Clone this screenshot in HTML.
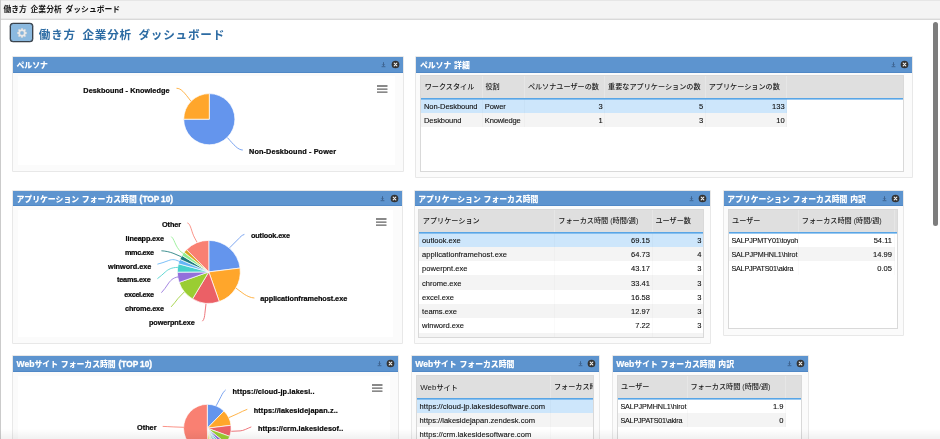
<!DOCTYPE html>
<html lang="ja"><head><meta charset="utf-8"><title>働き方 企業分析 ダッシュボード</title>
<style>
html,body{margin:0;padding:0;background:#fff;}
body{width:940px;height:439px;overflow:hidden;position:relative;-webkit-font-smoothing:antialiased;font-family:"Liberation Sans", "Noto Sans CJK JP", sans-serif;color:#222;}
.abs{position:absolute;}
#topbar{position:absolute;left:0;top:0;width:940px;height:18px;background:#f4f4f4;border-bottom:1px solid #e9e9e9;box-shadow:0 1px 0 #d9d9d9, inset 0 1px 0 #e6e6e6;box-sizing:content-box;}
#topbar span{position:absolute;left:3.4px;top:1.2px;line-height:18px;font-size:7.8px;color:#111;white-space:nowrap;word-spacing:1.6px;font-weight:700;}
#leftedge{position:absolute;left:0;top:0;width:1px;height:439px;background:#cbcbcb;z-index:5;}
#gear{position:absolute;left:10.4px;top:23.4px;width:20.4px;height:16.4px;border:1px solid #39414a;box-shadow:0 0 0 0.35px #39414a;border-radius:3.2px;background:#8bb9df;}
#title{position:absolute;left:38.8px;top:24px;font-size:11.6px;line-height:22px;color:#2c6ba3;white-space:nowrap;font-weight:700;word-spacing:2.4px;letter-spacing:0.8px;}
#thumb{position:absolute;left:933px;top:22px;width:5px;height:204px;border-radius:3px;background:#7d7d7d;}
.panel{position:absolute;background:#fbfbfb;box-shadow:0 0 0 0.7px #dedede;overflow:hidden;}
.ph{position:absolute;left:0;top:0;right:0;height:15px;background:#5d94cf;border-bottom:1px solid #5088c6;}
.pt{position:absolute;left:3.5px;top:0;line-height:17.4px;font-size:7.85px;font-weight:900;color:#fff;word-spacing:0.6px;white-space:nowrap;}
.lat{font-size:8.6px;-webkit-text-stroke:0.2px #fff;}
.lat2{font-size:8.3px;word-spacing:-0.6px;-webkit-text-stroke:0.35px #fff;letter-spacing:0.05px}
.dl{position:absolute;right:16.2px;top:5.2px;}
.cl{position:absolute;right:2.9px;top:2.8px;}
.inner{position:absolute;background:#fff;}
.chart{position:absolute;left:0;top:0;pointer-events:none;}
.chart text{font-family:"Liberation Sans",sans-serif;font-weight:bold;font-size:7.3px;fill:#0a0a0a;stroke:#0a0a0a;stroke-width:0.22px;}
.grid{position:absolute;background:#fff;box-shadow:0 0 0 1px #d9d9d9;overflow:hidden;font-size:7.55px;}
.gh{position:absolute;left:0;top:0;right:0;background:#dfdfdf;z-index:2;}
.bl{position:absolute;left:0;right:0;height:2px;background:linear-gradient(to bottom,#58a5e6 0,#58a5e6 1px,rgba(88,165,230,0.6) 1px,rgba(88,165,230,0.6) 2px);z-index:3;}
.hc{position:absolute;top:0;box-sizing:border-box;padding-left:3.5px;border-right:1px solid #e6e6e6;font-size:7.13px;color:#1a1a1a;font-weight:500;white-space:nowrap;overflow:hidden;}
.gr{position:absolute;left:0;}
.gr.sel{background:#cde6fb;}
.gr.alt{background:#f4f4f4;}
.gr.wh{background:#fff;}
.gc{position:absolute;top:0;height:100%;box-sizing:border-box;padding:1.2px 1.6px 0 2.8px;white-space:nowrap;overflow:hidden;border-right:1px solid rgba(0,0,0,0.02);color:#0d0d0d;-webkit-text-stroke:0.1px #0d0d0d}
.gc.r{text-align:right;}
#root{position:absolute;left:0;top:0;width:940px;height:439px;overflow:hidden;will-change:transform;}
</style></head><body><div id="root">
<div id="topbar"><span>働き方 企業分析 ダッシュボード</span></div>
<div id="leftedge"></div>
<div id="gear"><svg class="abs" style="left:5.3px;top:3.4px" width="10" height="10" viewBox="0 0 10 10"><path d="M4.08 1.42L4.23 0.16L5.77 0.16L5.92 1.42L6.88 1.82L7.88 1.04L8.96 2.12L8.18 3.12L8.58 4.08L9.84 4.23L9.84 5.77L8.58 5.92L8.18 6.88L8.96 7.88L7.88 8.96L6.88 8.18L5.92 8.58L5.77 9.84L4.23 9.84L4.08 8.58L3.12 8.18L2.12 8.96L1.04 7.88L1.82 6.88L1.42 5.92L0.16 5.77L0.16 4.23L1.42 4.08L1.82 3.12L1.04 2.12L2.12 1.04L3.12 1.82Z" fill="#ececec" stroke="#c4c8cc" stroke-width="0.35" stroke-linejoin="round"/><circle cx="5" cy="5" r="1.95" fill="#86b6de" stroke="#c4c8cc" stroke-width="0.35"/></svg></div>
<div id="title">働き方 企業分析 ダッシュボード</div>
<div id="thumb"></div>
<div class="panel" style="left:13px;top:57px;width:389.5px;height:114.30000000000001px">
<div class="ph" style="height:15px"><span class="pt">ペルソナ</span><svg class="dl" width="5" height="6" viewBox="0 0 5 6"><path d="M2.5 0.2V3.4M1.3 2.4L2.5 3.6L3.7 2.4M0.6 4.7H4.4" fill="none" stroke="#35567f" stroke-width="0.75"/></svg><svg class="cl" width="9" height="9" viewBox="0 0 9 9"><circle cx="4.5" cy="4.5" r="3.85" fill="#333"/><path d="M3.2 3.2L5.8 5.8M5.8 3.2L3.2 5.8" stroke="#f0f0f0" stroke-width="1.15" stroke-linecap="round"/></svg></div>
<div class="inner" style="left:4.6px;top:19.2px;width:377px;height:89.2px"></div>
</div><div class="panel" style="left:416.4px;top:57px;width:495.6px;height:120.4px">
<div class="ph" style="height:15px"><span class="pt">ペルソナ 詳細</span><svg class="dl" width="5" height="6" viewBox="0 0 5 6"><path d="M2.5 0.2V3.4M1.3 2.4L2.5 3.6L3.7 2.4M0.6 4.7H4.4" fill="none" stroke="#35567f" stroke-width="0.75"/></svg><svg class="cl" width="9" height="9" viewBox="0 0 9 9"><circle cx="4.5" cy="4.5" r="3.85" fill="#333"/><path d="M3.2 3.2L5.8 5.8M5.8 3.2L3.2 5.8" stroke="#f0f0f0" stroke-width="1.15" stroke-linecap="round"/></svg></div>

</div><div class="panel" style="left:13px;top:191px;width:388.6px;height:152.10000000000002px">
<div class="ph" style="height:14.199999999999989px"><span class="pt">アプリケーション フォーカス時間 <span class="lat2">(TOP 10)</span></span><svg class="dl" width="5" height="6" viewBox="0 0 5 6"><path d="M2.5 0.2V3.4M1.3 2.4L2.5 3.6L3.7 2.4M0.6 4.7H4.4" fill="none" stroke="#35567f" stroke-width="0.75"/></svg><svg class="cl" width="9" height="9" viewBox="0 0 9 9"><circle cx="4.5" cy="4.5" r="3.85" fill="#333"/><path d="M3.2 3.2L5.8 5.8M5.8 3.2L3.2 5.8" stroke="#f0f0f0" stroke-width="1.15" stroke-linecap="round"/></svg></div>
<div class="inner" style="left:4.6px;top:19px;width:375.6px;height:127px"></div>
</div><div class="panel" style="left:414.7px;top:191px;width:295.7px;height:152px">
<div class="ph" style="height:14.199999999999989px"><span class="pt">アプリケーション フォーカス時間</span><svg class="dl" width="5" height="6" viewBox="0 0 5 6"><path d="M2.5 0.2V3.4M1.3 2.4L2.5 3.6L3.7 2.4M0.6 4.7H4.4" fill="none" stroke="#35567f" stroke-width="0.75"/></svg><svg class="cl" width="9" height="9" viewBox="0 0 9 9"><circle cx="4.5" cy="4.5" r="3.85" fill="#333"/><path d="M3.2 3.2L5.8 5.8M5.8 3.2L3.2 5.8" stroke="#f0f0f0" stroke-width="1.15" stroke-linecap="round"/></svg></div>

</div><div class="panel" style="left:723.7px;top:191px;width:179.5999999999999px;height:144px">
<div class="ph" style="height:14.199999999999989px"><span class="pt">アプリケーション フォーカス時間 内訳</span><svg class="dl" width="5" height="6" viewBox="0 0 5 6"><path d="M2.5 0.2V3.4M1.3 2.4L2.5 3.6L3.7 2.4M0.6 4.7H4.4" fill="none" stroke="#35567f" stroke-width="0.75"/></svg><svg class="cl" width="9" height="9" viewBox="0 0 9 9"><circle cx="4.5" cy="4.5" r="3.85" fill="#333"/><path d="M3.2 3.2L5.8 5.8M5.8 3.2L3.2 5.8" stroke="#f0f0f0" stroke-width="1.15" stroke-linecap="round"/></svg></div>

</div><div class="panel" style="left:13px;top:356.2px;width:385.3px;height:88.80000000000001px">
<div class="ph" style="height:15.100000000000023px"><span class="pt"><span class="lat">Web</span>サイト フォーカス時間 <span class="lat2">(TOP 10)</span></span><svg class="dl" width="5" height="6" viewBox="0 0 5 6"><path d="M2.5 0.2V3.4M1.3 2.4L2.5 3.6L3.7 2.4M0.6 4.7H4.4" fill="none" stroke="#35567f" stroke-width="0.75"/></svg><svg class="cl" width="9" height="9" viewBox="0 0 9 9"><circle cx="4.5" cy="4.5" r="3.85" fill="#333"/><path d="M3.2 3.2L5.8 5.8M5.8 3.2L3.2 5.8" stroke="#f0f0f0" stroke-width="1.15" stroke-linecap="round"/></svg></div>
<div class="inner" style="left:4.6px;top:19.4px;width:372.8px;height:80px"></div>
</div><div class="panel" style="left:411.7px;top:356.2px;width:187.50000000000006px;height:88.80000000000001px">
<div class="ph" style="height:15.100000000000023px"><span class="pt"><span class="lat">Web</span>サイト フォーカス時間</span><svg class="dl" width="5" height="6" viewBox="0 0 5 6"><path d="M2.5 0.2V3.4M1.3 2.4L2.5 3.6L3.7 2.4M0.6 4.7H4.4" fill="none" stroke="#35567f" stroke-width="0.75"/></svg><svg class="cl" width="9" height="9" viewBox="0 0 9 9"><circle cx="4.5" cy="4.5" r="3.85" fill="#333"/><path d="M3.2 3.2L5.8 5.8M5.8 3.2L3.2 5.8" stroke="#f0f0f0" stroke-width="1.15" stroke-linecap="round"/></svg></div>

</div><div class="panel" style="left:612.8px;top:356.2px;width:195.0px;height:88.80000000000001px">
<div class="ph" style="height:15.100000000000023px"><span class="pt"><span class="lat">Web</span>サイト フォーカス時間 内訳</span><svg class="dl" width="5" height="6" viewBox="0 0 5 6"><path d="M2.5 0.2V3.4M1.3 2.4L2.5 3.6L3.7 2.4M0.6 4.7H4.4" fill="none" stroke="#35567f" stroke-width="0.75"/></svg><svg class="cl" width="9" height="9" viewBox="0 0 9 9"><circle cx="4.5" cy="4.5" r="3.85" fill="#333"/><path d="M3.2 3.2L5.8 5.8M5.8 3.2L3.2 5.8" stroke="#f0f0f0" stroke-width="1.15" stroke-linecap="round"/></svg></div>

</div><div class="grid" style="left:421.2px;top:76.4px;width:482.09999999999997px;height:94.69999999999999px"><div class="gh" style="height:21.7px"><div class="hc" style="left:0.0px;width:61.40000000000001px;height:21.7px;line-height:22.599999999999998px">ワークスタイル</div><div class="hc" style="left:60.80000000000001px;width:42.99999999999998px;height:21.7px;line-height:22.599999999999998px">役割</div><div class="hc" style="left:103.19999999999999px;width:80.80000000000004px;height:21.7px;line-height:22.599999999999998px">ペルソナユーザーの数</div><div class="hc" style="left:183.40000000000003px;width:101.20000000000002px;height:21.7px;line-height:22.599999999999998px">重要なアプリケーションの数</div><div class="hc" style="left:284.00000000000006px;width:82.1px;height:21.7px;line-height:22.599999999999998px">アプリケーションの数</div></div><div class="bl" style="top:21.7px"></div><div class="gr sel" style="top:22.35px;width:366.1000000000001px;height:14.3px;line-height:14.3px"><div class="gc l" style="left:0.0px;width:61.40000000000001px;letter-spacing:-0.08px">Non-Deskbound</div><div class="gc l" style="left:60.80000000000001px;width:42.99999999999998px;letter-spacing:-0.08px">Power</div><div class="gc r" style="left:103.19999999999999px;width:80.80000000000004px">3</div><div class="gc r" style="left:183.40000000000003px;width:101.20000000000002px">5</div><div class="gc r" style="left:284.00000000000006px;width:82.1px">133</div></div><div class="gr alt" style="top:36.650000000000006px;width:366.1000000000001px;height:14.3px;line-height:14.3px"><div class="gc l" style="left:0.0px;width:61.40000000000001px;letter-spacing:-0.08px">Deskbound</div><div class="gc l" style="left:60.80000000000001px;width:42.99999999999998px;letter-spacing:-0.18px">Knowledge</div><div class="gc r" style="left:103.19999999999999px;width:80.80000000000004px">1</div><div class="gc r" style="left:183.40000000000003px;width:101.20000000000002px">3</div><div class="gc r" style="left:284.00000000000006px;width:82.1px">10</div></div></div><div class="grid" style="left:419.3px;top:210.1px;width:284.2px;height:127.20000000000002px"><div class="gh" style="height:21.7px"><div class="hc" style="left:0.0px;width:136.09999999999994px;height:21.7px;line-height:22.599999999999998px">アプリケーション</div><div class="hc" style="left:135.49999999999994px;width:97.80000000000004px;height:21.7px;line-height:22.599999999999998px">フォーカス時間 (時間/週)</div><div class="hc" style="left:232.7px;width:52.1px;height:21.7px;line-height:22.599999999999998px">ユーザー数</div></div><div class="bl" style="top:21.7px"></div><div class="gr sel" style="top:22.35px;width:284.8px;height:14.3px;line-height:14.3px"><div class="gc l" style="left:0.0px;width:136.09999999999994px">outlook.exe</div><div class="gc r" style="left:135.49999999999994px;width:97.80000000000004px">69.15</div><div class="gc r" style="left:232.7px;width:52.1px">3</div></div><div class="gr alt" style="top:36.650000000000006px;width:284.8px;height:14.3px;line-height:14.3px"><div class="gc l" style="left:0.0px;width:136.09999999999994px;letter-spacing:0.04px">applicationframehost.exe</div><div class="gc r" style="left:135.49999999999994px;width:97.80000000000004px">64.73</div><div class="gc r" style="left:232.7px;width:52.1px">4</div></div><div class="gr wh" style="top:50.95px;width:284.8px;height:14.3px;line-height:14.3px"><div class="gc l" style="left:0.0px;width:136.09999999999994px">powerpnt.exe</div><div class="gc r" style="left:135.49999999999994px;width:97.80000000000004px">43.17</div><div class="gc r" style="left:232.7px;width:52.1px">3</div></div><div class="gr alt" style="top:65.25px;width:284.8px;height:14.3px;line-height:14.3px"><div class="gc l" style="left:0.0px;width:136.09999999999994px">chrome.exe</div><div class="gc r" style="left:135.49999999999994px;width:97.80000000000004px">33.41</div><div class="gc r" style="left:232.7px;width:52.1px">3</div></div><div class="gr wh" style="top:79.55000000000001px;width:284.8px;height:14.3px;line-height:14.3px"><div class="gc l" style="left:0.0px;width:136.09999999999994px">excel.exe</div><div class="gc r" style="left:135.49999999999994px;width:97.80000000000004px">16.58</div><div class="gc r" style="left:232.7px;width:52.1px">3</div></div><div class="gr alt" style="top:93.85px;width:284.8px;height:14.3px;line-height:14.3px"><div class="gc l" style="left:0.0px;width:136.09999999999994px">teams.exe</div><div class="gc r" style="left:135.49999999999994px;width:97.80000000000004px">12.97</div><div class="gc r" style="left:232.7px;width:52.1px">3</div></div><div class="gr wh" style="top:108.15px;width:284.8px;height:14.3px;line-height:14.3px"><div class="gc l" style="left:0.0px;width:136.09999999999994px">winword.exe</div><div class="gc r" style="left:135.49999999999994px;width:97.80000000000004px">7.22</div><div class="gc r" style="left:232.7px;width:52.1px">3</div></div><div class="gr alt" style="top:122.45000000000002px;width:284.8px;height:14.3px;line-height:14.3px"><div class="gc l" style="left:0.0px;width:136.09999999999994px"></div><div class="gc r" style="left:135.49999999999994px;width:97.80000000000004px"></div><div class="gc r" style="left:232.7px;width:52.1px"></div></div></div><div class="grid" style="left:728.6px;top:210.1px;width:168.60000000000002px;height:118.1px"><div class="gh" style="height:21.7px"><div class="hc" style="left:0.0px;width:70.29999999999993px;height:21.7px;line-height:22.599999999999998px">ユーザー</div><div class="hc" style="left:69.69999999999993px;width:96.30000000000004px;height:21.7px;line-height:22.599999999999998px">フォーカス時間 (時間/週)</div></div><div class="bl" style="top:21.7px"></div><div class="gr wh" style="top:22.35px;width:165.99999999999997px;height:14.3px;line-height:14.3px"><div class="gc l" style="left:0.0px;width:70.29999999999993px;letter-spacing:-0.16px;font-size:7.2px">SALPJPMTY01\toyoh</div><div class="gc r" style="left:69.69999999999993px;width:96.30000000000004px">54.11</div></div><div class="gr alt" style="top:36.650000000000006px;width:165.99999999999997px;height:14.3px;line-height:14.3px"><div class="gc l" style="left:0.0px;width:70.29999999999993px;letter-spacing:-0.07px;font-size:7.2px">SALPJPMHNL1\hirot</div><div class="gc r" style="left:69.69999999999993px;width:96.30000000000004px">14.99</div></div><div class="gr wh" style="top:50.95px;width:165.99999999999997px;height:14.3px;line-height:14.3px"><div class="gc l" style="left:0.0px;width:70.29999999999993px;letter-spacing:-0.2px;font-size:7.2px">SALPJPATS01\akira</div><div class="gc r" style="left:69.69999999999993px;width:96.30000000000004px">0.05</div></div></div><div class="grid" style="left:416.8px;top:375.5px;width:175.99999999999994px;height:69.5px"><div class="gh" style="height:22.4px"><div class="hc" style="left:0.0px;width:134.19999999999996px;height:22.4px;line-height:23.299999999999997px"><span style="font-size:7.9px">Web</span>サイト</div><div class="hc" style="left:133.59999999999997px;width:90.20000000000002px;height:22.4px;line-height:23.299999999999997px">フォーカス時間 (時間/週)</div></div><div class="bl" style="top:22.4px"></div><div class="gr sel" style="top:22.9px;width:223.79999999999998px;height:14.3px;line-height:14.3px"><div class="gc l" style="left:0.0px;width:134.19999999999996px;letter-spacing:0.05px">https://cloud-jp.lakesidesoftware.com</div><div class="gc r" style="left:133.59999999999997px;width:90.20000000000002px"></div></div><div class="gr alt" style="top:37.2px;width:223.79999999999998px;height:14.3px;line-height:14.3px"><div class="gc l" style="left:0.0px;width:134.19999999999996px">https://lakesidejapan.zendesk.com</div><div class="gc r" style="left:133.59999999999997px;width:90.20000000000002px"></div></div><div class="gr wh" style="top:51.5px;width:223.79999999999998px;height:14.3px;line-height:14.3px"><div class="gc l" style="left:0.0px;width:134.19999999999996px;letter-spacing:0.055px">https://crm.lakesidesoftware.com</div><div class="gc r" style="left:133.59999999999997px;width:90.20000000000002px"></div></div></div><div class="grid" style="left:617.6px;top:375.5px;width:183.19999999999993px;height:69.5px"><div class="gh" style="height:22.4px"><div class="hc" style="left:0.0px;width:69.99999999999997px;height:22.4px;line-height:23.299999999999997px">ユーザー</div><div class="hc" style="left:69.39999999999998px;width:98.99999999999997px;height:22.4px;line-height:23.299999999999997px">フォーカス時間 (時間/週)</div></div><div class="bl" style="top:22.4px"></div><div class="gr wh" style="top:22.9px;width:168.39999999999995px;height:14.3px;line-height:14.3px"><div class="gc l" style="left:0.0px;width:69.99999999999997px;letter-spacing:-0.07px;font-size:7.2px">SALPJPMHNL1\hirot</div><div class="gc r" style="left:69.39999999999998px;width:98.99999999999997px">1.9</div></div><div class="gr alt" style="top:37.2px;width:168.39999999999995px;height:14.3px;line-height:14.3px"><div class="gc l" style="left:0.0px;width:69.99999999999997px;letter-spacing:-0.2px;font-size:7.2px">SALPJPATS01\akira</div><div class="gc r" style="left:69.39999999999998px;width:98.99999999999997px">0</div></div></div><svg class="chart" width="940" height="439" viewBox="0 0 940 439"><path d="M209.3 119.2L209.30 93.60A25.6 25.6 0 1 1 183.70 119.20Z" fill="#6495ed" stroke="#fff" stroke-width="0.7" stroke-linejoin="round"/>
<path d="M209.3 119.2L183.70 119.20A25.6 25.6 0 0 1 209.30 93.60Z" fill="#ffa62b" stroke="#fff" stroke-width="0.7" stroke-linejoin="round"/><path d="M176.5 88.3C181 88.3 184 92 191 101.3" fill="none" stroke="#ffa62b" stroke-width="0.85"/><path d="M242.8 150C238 150 234 145 227.4 137.6" fill="none" stroke="#6495ed" stroke-width="0.85"/><text x="83.3" y="92.7" text-anchor="start" textLength="86.2" lengthAdjust="spacing">Deskbound - Knowledge</text><text x="249" y="153.5" text-anchor="start" textLength="87" lengthAdjust="spacing">Non-Deskbound - Power</text><path d="M208.8 271.9L208.80 240.40A31.5 31.5 0 0 1 240.07 268.06Z" fill="#6495ed" stroke="#fff" stroke-width="0.7" stroke-linejoin="round"/>
<path d="M208.8 271.9L240.07 268.06A31.5 31.5 0 0 1 219.31 301.59Z" fill="#ffa62b" stroke="#fff" stroke-width="0.7" stroke-linejoin="round"/>
<path d="M208.8 271.9L219.31 301.59A31.5 31.5 0 0 1 192.58 298.90Z" fill="#eb6066" stroke="#fff" stroke-width="0.7" stroke-linejoin="round"/>
<path d="M208.8 271.9L192.58 298.90A31.5 31.5 0 0 1 179.11 282.41Z" fill="#9acd32" stroke="#fff" stroke-width="0.7" stroke-linejoin="round"/>
<path d="M208.8 271.9L179.11 282.41A31.5 31.5 0 0 1 177.30 272.17Z" fill="#9370db" stroke="#fff" stroke-width="0.7" stroke-linejoin="round"/>
<path d="M208.8 271.9L177.30 272.17A31.5 31.5 0 0 1 178.37 263.75Z" fill="#48d1cc" stroke="#fff" stroke-width="0.7" stroke-linejoin="round"/>
<path d="M208.8 271.9L178.37 263.75A31.5 31.5 0 0 1 179.91 259.34Z" fill="#64b5f6" stroke="#fff" stroke-width="0.7" stroke-linejoin="round"/>
<path d="M208.8 271.9L179.91 259.34A31.5 31.5 0 0 1 181.94 255.44Z" fill="#1c7c7c" stroke="#fff" stroke-width="0.7" stroke-linejoin="round"/>
<path d="M208.8 271.9L181.94 255.44A31.5 31.5 0 0 1 184.15 252.29Z" fill="#90ee90" stroke="#fff" stroke-width="0.7" stroke-linejoin="round"/>
<path d="M208.8 271.9L184.15 252.29A31.5 31.5 0 0 1 186.53 249.63Z" fill="#daa520" stroke="#fff" stroke-width="0.7" stroke-linejoin="round"/>
<path d="M208.8 271.9L186.53 249.63A31.5 31.5 0 0 1 208.80 240.40Z" fill="#f98072" stroke="#fff" stroke-width="0.7" stroke-linejoin="round"/><text x="162" y="227.1" text-anchor="start" textLength="19.2" lengthAdjust="spacing">Other</text><text x="125.6" y="240.6" text-anchor="start" textLength="38.4" lengthAdjust="spacing">lineapp.exe</text><text x="125" y="254.8" text-anchor="start" textLength="29" lengthAdjust="spacing">mmc.exe</text><text x="108" y="268.6" text-anchor="start" textLength="43.3" lengthAdjust="spacing">winword.exe</text><text x="117" y="282.2" text-anchor="start" textLength="33.7" lengthAdjust="spacing">teams.exe</text><text x="124.2" y="296.9" text-anchor="start" textLength="29.8" lengthAdjust="spacing">excel.exe</text><text x="125" y="311.1" text-anchor="start" textLength="39" lengthAdjust="spacing">chrome.exe</text><text x="149" y="324.9" text-anchor="start" textLength="45.8" lengthAdjust="spacing">powerpnt.exe</text><text x="251" y="237.7" text-anchor="start" textLength="39" lengthAdjust="spacing">outlook.exe</text><text x="260.3" y="300.7" text-anchor="start" textLength="86.9" lengthAdjust="spacing">applicationframehost.exe</text><path d="M187.4 222.9C190 223.5 191.3 229.5 192.6 233.2S195.6 239.6 197 242.1" fill="none" stroke="#f98072" stroke-width="0.85"/><path d="M171.3 236.6C173.5 238.5 174.5 242 176 245S180 252 183.7 253.7" fill="none" stroke="#90ee90" stroke-width="0.85"/><path d="M161.4 250.8C165 250.9 169.6 251.9 173 253.2L181.2 256.7" fill="none" stroke="#1c7c7c" stroke-width="0.85"/><path d="M157.4 264.2C161 263.3 165 262 168.7 260.5S175.5 259.4 180.4 262" fill="none" stroke="#64b5f6" stroke-width="0.85"/><path d="M157.4 278.7C160.5 276.5 163 274 165.5 271.8S171.5 267.4 177.8 267.4" fill="none" stroke="#48d1cc" stroke-width="0.85"/><path d="M161.4 292.7C164 290 166 287 168 284S172.8 277.6 178.2 276.9" fill="none" stroke="#9370db" stroke-width="0.85"/><path d="M171.1 306.9C173.5 304.5 176 301 177.8 298.7L184.2 292" fill="none" stroke="#9acd32" stroke-width="0.85"/><path d="M202.4 321.2C204.3 319.5 204.6 316 204.9 313.3L206 303.8" fill="none" stroke="#eb6066" stroke-width="0.85"/><path d="M244.4 234.4C241.8 235.2 240.2 237 238.7 238.7L229.6 247.8" fill="none" stroke="#6495ed" stroke-width="0.85"/><path d="M254.4 298C250.5 297.8 247 296 244.2 294.2L236 288.2" fill="none" stroke="#ffa62b" stroke-width="0.85"/><path d="M207.3 428.2L207.30 404.30A23.9 23.9 0 0 1 223.90 411.01Z" fill="#6495ed" stroke="#fff" stroke-width="0.7" stroke-linejoin="round"/>
<path d="M207.3 428.2L223.90 411.01A23.9 23.9 0 0 1 231.02 425.29Z" fill="#ffa62b" stroke="#fff" stroke-width="0.7" stroke-linejoin="round"/>
<path d="M207.3 428.2L231.02 425.29A23.9 23.9 0 0 1 229.76 436.37Z" fill="#eb6066" stroke="#fff" stroke-width="0.7" stroke-linejoin="round"/>
<path d="M207.3 428.2L229.76 436.37A23.9 23.9 0 0 1 225.87 443.24Z" fill="#9acd32" stroke="#fff" stroke-width="0.7" stroke-linejoin="round"/>
<path d="M207.3 428.2L225.87 443.24A23.9 23.9 0 0 1 222.98 446.24Z" fill="#9370db" stroke="#fff" stroke-width="0.7" stroke-linejoin="round"/>
<path d="M207.3 428.2L222.98 446.24A23.9 23.9 0 0 1 220.66 448.01Z" fill="#48d1cc" stroke="#fff" stroke-width="0.7" stroke-linejoin="round"/>
<path d="M207.3 428.2L220.66 448.01A23.9 23.9 0 0 1 218.52 449.30Z" fill="#64b5f6" stroke="#fff" stroke-width="0.7" stroke-linejoin="round"/>
<path d="M207.3 428.2L218.52 449.30A23.9 23.9 0 0 1 216.25 450.36Z" fill="#1c7c7c" stroke="#fff" stroke-width="0.7" stroke-linejoin="round"/>
<path d="M207.3 428.2L216.25 450.36A23.9 23.9 0 0 1 213.89 451.17Z" fill="#90ee90" stroke="#fff" stroke-width="0.7" stroke-linejoin="round"/>
<path d="M207.3 428.2L213.89 451.17A23.9 23.9 0 0 1 211.86 451.66Z" fill="#daa520" stroke="#fff" stroke-width="0.7" stroke-linejoin="round"/>
<path d="M207.3 428.2L211.86 451.66A23.9 23.9 0 0 1 208.13 452.09Z" fill="#e6e65a" stroke="#fff" stroke-width="0.7" stroke-linejoin="round"/>
<path d="M207.3 428.2L208.13 452.09A23.9 23.9 0 1 1 207.30 404.30Z" fill="#f98072" stroke="#fff" stroke-width="0.7" stroke-linejoin="round"/><text x="232.5" y="393.8" text-anchor="start" textLength="82" lengthAdjust="spacing">https://cloud-jp.lakesi..</text><text x="253.8" y="413.3" text-anchor="start" textLength="84" lengthAdjust="spacing">https://lakesidejapan.z..</text><text x="258" y="430.5" text-anchor="start" textLength="85.2" lengthAdjust="spacing">https://crm.lakesidesof..</text><text x="137" y="429.9" text-anchor="start" textLength="19.5" lengthAdjust="spacing">Other</text><path d="M225.7 389.9C223.8 391.3 222.2 394 221 396.6L216.2 405.8" fill="none" stroke="#6495ed" stroke-width="0.85"/><path d="M247.3 409.3C244 410.4 241.2 412 238.5 413.3L228.9 417.6" fill="none" stroke="#ffa62b" stroke-width="0.85"/><path d="M251.3 426.9C247 428.6 243.5 430.7 240.1 430.9L231.3 431.3" fill="none" stroke="#eb6066" stroke-width="0.85"/><path d="M162.7 426.4C166 426.4 169.6 426.8 173.1 426.9L183.9 427.3" fill="none" stroke="#f98072" stroke-width="0.85"/></svg><svg class="abs" style="left:376.7px;top:84.7px" width="11" height="9" viewBox="0 0 11 9"><path d="M0.4 1H10M0.4 4.1H10M0.4 7.1H10" stroke="#636363" stroke-width="1.45" stroke-linecap="round"/></svg><svg class="abs" style="left:375.5px;top:218.2px" width="11" height="9" viewBox="0 0 11 9"><path d="M0.4 1H10M0.4 4.1H10M0.4 7.1H10" stroke="#636363" stroke-width="1.45" stroke-linecap="round"/></svg><svg class="abs" style="left:372.4px;top:383.9px" width="11" height="9" viewBox="0 0 11 9"><path d="M0.4 1H10M0.4 4.1H10M0.4 7.1H10" stroke="#636363" stroke-width="1.45" stroke-linecap="round"/></svg><div class="abs" style="left:0;top:429px;width:940px;height:10px;background:linear-gradient(to bottom,rgba(0,0,0,0),rgba(0,0,0,0.055));z-index:9"></div></div></body></html>
